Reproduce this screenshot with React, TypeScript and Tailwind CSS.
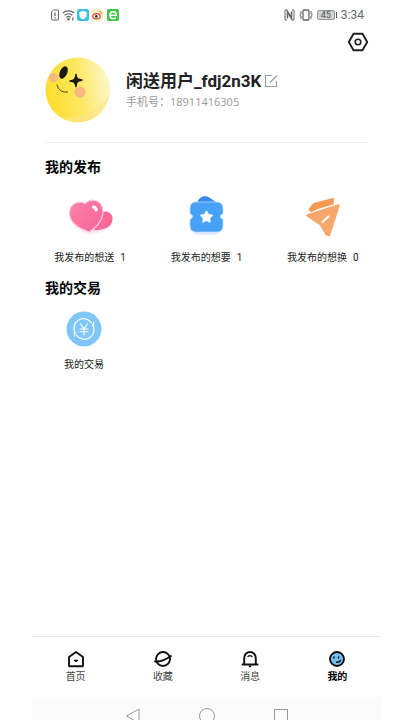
import type { ReactNode } from "react";

function StatusBar() {
  return (
    <div className="flex h-[30px] items-center justify-between pl-[18px] pr-[17px] text-[#666]">
      <div className="flex items-center gap-[2px]">
        <svg className="h-3 w-[10px]" viewBox="0 0 10 12" fill="none" stroke="currentColor" strokeWidth="1">
          <path d="M3.5 1h4a1 1 0 011 1v8a1 1 0 01-1 1h-5a1 1 0 01-1-1V3z" />
          <path d="M5 3.5v3.5M5 8.2v1.3" strokeWidth="1.3" />
        </svg>
        <svg className="h-3 w-[13px]" viewBox="0 0 13 12" fill="none" stroke="currentColor" strokeWidth="1.2">
          <path d="M.8 4a8.5 8.5 0 0111.4 0M2.6 6.3a5.8 5.8 0 017.8 0M4.4 8.5a3 3 0 014.2 0" />
          <circle cx="6.5" cy="10.3" r=".7" fill="currentColor" />
          <path d="M10.8 8.5v3" />
        </svg>
        <svg className="h-3 w-3" viewBox="0 0 12 12">
          <rect width="12" height="12" rx="2.5" fill="#3dc0dc" />
          <path d="M6 2l3.6 1v3.2C9.6 8.3 8 9.6 6 10.3 4 9.6 2.4 8.3 2.4 6.2V3z" fill="#fff" />
        </svg>
        <svg className="h-3 w-3" viewBox="0 0 12 12">
          <rect width="12" height="12" rx="2.5" fill="#fdeec4" />
          <ellipse cx="5.5" cy="7.2" rx="4.2" ry="3.2" fill="#d9483b" />
          <ellipse cx="5.5" cy="7.3" rx="2.9" ry="2" fill="#fff" />
          <circle cx="5.3" cy="7.4" r="1.4" fill="#333" />
          <path d="M7.8 2.2a2.5 2.5 0 012.5 2.7" fill="none" stroke="#ec8a2b" />
        </svg>
        <svg className="ml-[2px] h-3 w-3" viewBox="0 0 12 12">
          <rect width="12" height="12" rx="1.5" fill="#45c653" />
          <path d="M3 6.2h6.2C9.2 4 8 2.7 6.2 2.7S3 4.2 3 6.2s1.2 3.4 3.2 3.4c1.2 0 2-.4 2.7-1.1" fill="none" stroke="#fff" strokeWidth="1.5" />
        </svg>
      </div>
      <div className="flex items-center gap-[4px]">
        <svg className="h-3 w-[11px]" viewBox="0 0 11 12" fill="none" stroke="currentColor">
          <path d="M3 1H1v10h2M8 1h2v10H8" />
          <path d="M3.5 9.5v-7l4 7v-7" strokeWidth="1.6" />
        </svg>
        <svg className="h-3 w-[14px]" viewBox="0 0 14 12" fill="none" stroke="currentColor">
          <rect x="4" y="1" width="6" height="10" rx="1" strokeWidth="1.3" />
          <path d="M2 2v3M1.2 4.5v3M2 7v3M12 2v3M12.8 4.5v3M12 7v3" />
        </svg>
        <div className="flex items-center gap-px">
          <span className="flex h-[10px] w-[18px] items-center justify-center rounded-[2px] border border-[#999] bg-[#d0d0d0] text-[9px] leading-none text-[#555]">
            45
          </span>
          <span className="h-[6px] w-px bg-[#555]" />
        </div>
        <span className="text-[12px] leading-4">3:34</span>
      </div>
    </div>
  );
}

function Avatar() {
  return (
    <svg className="h-[66px] w-[66px] shrink-0" viewBox="0 0 66 66">
      <defs>
        <linearGradient id="face" x1="0" y1=".55" x2="1" y2=".4">
          <stop offset="0" stopColor="#fddd2c" />
          <stop offset=".5" stopColor="#fde75e" />
          <stop offset="1" stopColor="#fdf8cf" />
        </linearGradient>
      </defs>
      <circle cx="33" cy="33" r="32.5" fill="url(#face)" />
      <path d="M19 60c18 1 35-6 45-22-3 15-15 26-31 27-5 0-10-2-14-5z" fill="#fbe390" opacity=".6" />
      <circle cx="8.5" cy="20.5" r="4.5" fill="#f8b885" />
      <circle cx="35" cy="35" r="5.5" fill="#f8b885" />
      <ellipse cx="18.5" cy="15.5" rx="3.7" ry="6.5" transform="rotate(24 18.5 15.5)" fill="#1b1a12" />
      <path
        d="M31 17.5c.5 4 1.200 5 6 5.500-4.800.8-5.500 2-6 6.500-.8-4.300-1.500-5-6-5.500 4.500-.8 5.500-2 6-6.500z"
        fill="#1b1a12"
        stroke="#1b1a12"
        strokeWidth="1.5"
        strokeLinejoin="round"
      />
      <path d="M12 28c1 4.500 5 8 10.500 7" fill="none" stroke="#4a3f16" strokeWidth="1" strokeLinecap="round" />
    </svg>
  );
}

function HeartsIcon() {
  return (
    <svg className="h-12 w-12" viewBox="0 0 48 48">
      <defs>
        <linearGradient id="heart" x1="0" y1="0" x2="1" y2="1">
          <stop offset="0" stopColor="#fb82a8" />
          <stop offset="1" stopColor="#f96496" />
        </linearGradient>
      </defs>
      <path d="M4 28c3 7 12 12 18 15 5-1 15-2 19-6l-8-8z" fill="#fdecf1" />
      <path d="M35 22c3-5 11-2 11.5 4C47 33 42 38 28 38.5z" fill="#f96998" />
      <path
        d="M23.5 40C14 37 3.5 31 3.5 21c0-9 9-13 15.500-9.500 6-6 15.500-3.500 17.500 4.500 2 10-5 18.500-13 24z"
        fill="url(#heart)"
        stroke="#ffc9da"
        strokeWidth="1.2"
      />
      <path d="M27.500 15c1.500.3 2.500 1.500 2.700 3" fill="none" stroke="#fff" strokeWidth="3.2" strokeLinecap="round" />
    </svg>
  );
}

function TicketIcon() {
  return (
    <svg className="h-12 w-12" viewBox="0 0 48 48">
      <rect x="9" y="18" width="31" height="25" rx="8" fill="#e2edfd" />
      <path d="M15 12c1-8 9-9.500 13-6l9 6z" fill="#3889ea" />
      <path
        d="M15 10h19c5 0 7 2 7 7v5c-3.500 0-3.500 5 0 5v6c0 5-2 7-7 7H15c-5 0-7-2-7-7v-6c3.500 0 3.500-5 0-5v-5c0-5 2-7 7-7z"
        fill="#46a1f7"
        stroke="#b5d8fc"
        strokeWidth=".8"
      />
      <path
        d="M24.500 19.500l1.700 3.300 3.700.6-2.700 2.600.6 3.700-3.300-1.800-3.300 1.800.6-3.700-2.700-2.600 3.700-.6z"
        fill="#fff"
        stroke="#fff"
        strokeWidth="1.8"
        strokeLinejoin="round"
      />
    </svg>
  );
}

function PlaneIcon() {
  return (
    <svg className="h-12 w-12" viewBox="0 0 48 48" strokeLinejoin="round">
      <path d="M10.500 17.500l4.500-5.500 19-5-.5 8-20 5z" fill="#f59a55" stroke="#f59a55" strokeWidth="2" />
      <path d="M8.500 24l11-5 20-6" fill="none" stroke="#fff" strokeWidth="4" />
      <path d="M8.500 23.500l31-10L30 43l-2.500-1L22 32.500z" fill="#f8a76b" stroke="#f8a76b" strokeWidth="2.500" />
      <path d="M23.500 30l6-5.500" stroke="#fff" strokeWidth="2" strokeLinecap="round" />
    </svg>
  );
}

const posts = [
  { label: "我发布的想送", count: 1, icon: <HeartsIcon /> },
  { label: "我发布的想要", count: 1, icon: <TicketIcon /> },
  { label: "我发布的想换", count: 0, icon: <PlaneIcon /> },
];

type Tab = { label: string; icon: ReactNode; active?: boolean };

const tabs: Tab[] = [
  {
    label: "首页",
    icon: (
      <>
        <path d="M2 7l7-5 7 5v8.500a.8.8 0 01-.8.8H2.800a.8.8 0 01-.8-.8z" />
        <path d="M7.500 10.500h3L9 11.500z" strokeWidth="1.3" />
      </>
    ),
  },
  {
    label: "收藏",
    icon: (
      <>
        <circle cx="9" cy="9" r="7" />
        <path d="M1 11.500c5 .5 11-2 16-5.500" />
      </>
    ),
  },
  {
    label: "消息",
    icon: (
      <>
        <path d="M3.200 14V8a5.800 6 0 0111.600 0v6M1.500 14.500h15" />
        <path d="M7 6.500c1-1 3-1 4 0" strokeWidth="1.4" />
        <path d="M8.700 16.300h.6" />
      </>
    ),
  },
  {
    label: "我的",
    active: true,
    icon: (
      <>
        <circle cx="9" cy="9" r="7" fill="#74bff5" />
        <path d="M6 7v1M10.500 7v1" strokeWidth="1.5" />
        <path d="M8.500 12.200c1.700.3 3-.2 4-1.700" strokeWidth="1.4" />
      </>
    ),
  },
];

export default function App() {
  return (
    <div className="flex min-h-screen flex-col bg-white pl-8 pr-6 font-[Roboto,'Noto_Sans_CJK_SC',sans-serif] text-[#222]">
      <StatusBar />

      <main className="flex-1">
        <header className="flex justify-end pr-[11px]">
          <button aria-label="设置" className="p-px">
            <svg className="h-[22px] w-[22px]" viewBox="0 0 22 22" fill="none" stroke="#1c1f24" strokeLinejoin="round">
              <path d="M6.500 2.800h9l4.700 8.200-4.700 8.200h-9L1.800 11z" strokeWidth="1.9" />
              <circle cx="11" cy="11" r="2.8" strokeWidth="1.6" />
            </svg>
          </button>
        </header>

        {/* Profile */}
        <section className="mx-[13px] mt-[3px] flex gap-[15px] border-b border-[#eee] pb-[19px]">
          <Avatar />
          <div className="pt-3">
            <div className="flex items-center gap-[3px]">
              <h1 className="text-[17px] font-bold leading-6">闲送用户_fdj2n3K</h1>
              <button aria-label="编辑">
                <svg className="h-[14px] w-[14px]" viewBox="0 0 14 14" fill="none" stroke="#999" strokeWidth="1.1">
                  <path d="M8 1.500H1.500v11h11V7M6 8.500l7-7" />
                </svg>
              </button>
            </div>
            <p className="font-['Open_Sans','Noto_Sans_CJK_SC',sans-serif] text-[11px] leading-[18px] text-[#999]">
              手机号：18911416305
            </p>
          </div>
        </section>

        {/* Posts */}
        <section className="pt-[14px]">
          <h2 className="pl-[13px] text-[14px] font-bold leading-5 text-black">我的发布</h2>
          <div className="mt-[15px] grid grid-cols-3">
            {posts.map((post) => (
              <button key={post.label} className="flex flex-col items-center gap-[10px]">
                {post.icon}
                <span className="flex gap-[6px] text-[10px] leading-4">
                  <span>{post.label}</span>
                  <span>{post.count}</span>
                </span>
              </button>
            ))}
          </div>
        </section>

        {/* Trades */}
        <section className="pt-3">
          <h2 className="pl-[13px] text-[14px] font-bold leading-5 text-black">我的交易</h2>
          <button className="mt-[13px] flex w-[104px] flex-col items-center gap-[10px]">
            <svg className="h-9 w-9" viewBox="0 0 36 36" fill="none" stroke="#fff" strokeWidth="1.1" strokeLinecap="round">
              <circle cx="18" cy="18" r="17.5" fill="#80c7f7" stroke="none" />
              <path d="M9.500 22.500A9.500 9.500 0 0125.500 12M26.500 13.500A9.500 9.500 0 0110.500 24" />
              <path d="M27.500 11v6M8.500 19v6" />
              <path d="M14.500 13l3.500 4.500 3.500-4.500M18 17.500V24M14 18h8M14 20.700h8" />
            </svg>
            <span className="text-[10px] leading-4">我的交易</span>
          </button>
        </section>
      </main>

      <nav className="grid grid-cols-4 border-t border-[#e8e8e8] pb-3 pt-[13px]">
        {tabs.map((tab) => (
          <button
            key={tab.label}
            className={`flex flex-col items-center gap-px text-[10px] leading-4 ${
              tab.active ? "font-bold text-black" : "text-[#444]"
            }`}
          >
            <svg
              className="h-[18px] w-[18px]"
              viewBox="0 0 18 18"
              fill="none"
              stroke="#111"
              strokeWidth="1.9"
              strokeLinecap="round"
              strokeLinejoin="round"
            >
              {tab.icon}
            </svg>
            <span>{tab.label}</span>
          </button>
        ))}
      </nav>

      {/* System navigation */}
      <div className="flex h-[23px] justify-center gap-[58px] overflow-hidden bg-[#fbfbfb] pt-[11px] text-[#999]">
        <svg className="h-4 w-4 shrink-0" viewBox="0 0 16 16" fill="none" stroke="currentColor">
          <path d="M14 1v14L1.500 8z" />
        </svg>
        <svg className="h-4 w-4 shrink-0" viewBox="0 0 16 16" fill="none" stroke="currentColor">
          <circle cx="8" cy="8" r="7.5" />
        </svg>
        <svg className="h-4 w-4 shrink-0" viewBox="0 0 16 16" fill="none" stroke="currentColor">
          <rect x="1.5" y="1.5" width="13" height="13" />
        </svg>
      </div>
    </div>
  );
}
